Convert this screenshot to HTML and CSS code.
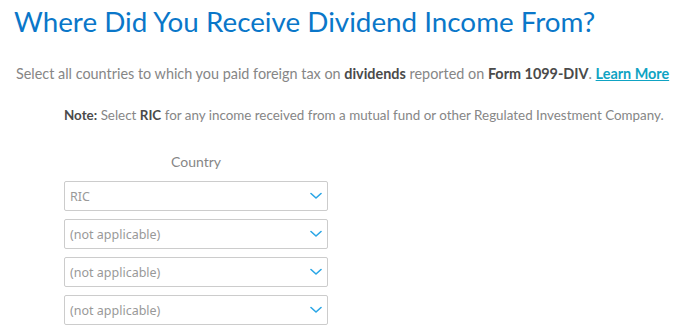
FILE: index.html
```html
<!DOCTYPE html>
<html>
  <head>
    <meta charset="UTF-8" />
    <title>Foreign Tax - Dividends</title>
    <link rel="stylesheet" href="styles.css">
  </head>
  <body>
    <div class="page">
      <h1 class="title">Where Did You Receive Dividend Income From?</h1>
      <p class="intro">Select all countries to which you paid foreign tax on <b>dividends</b> reported on <b>Form 1099-DIV</b>. <a href="#" class="learn">Learn More</a></p>
      <p class="note"><b>Note:</b> Select <b>RIC</b> for any income received from a mutual fund or other Regulated Investment Company.</p>

      <div class="countries">
        <div class="col-label">Country</div>
        <div class="pick">
          <span>RIC</span>
          <svg class="chev" viewBox="0 0 12 8" width="12" height="8"><path d="M1 1.5 L6 6 L11 1.5" fill="none" stroke="#2aa6e6" stroke-width="1.6" stroke-linecap="round" stroke-linejoin="round"/></svg>
        </div>
        <div class="pick">
          <span>(not applicable)</span>
          <svg class="chev" viewBox="0 0 12 8" width="12" height="8"><path d="M1 1.5 L6 6 L11 1.5" fill="none" stroke="#2aa6e6" stroke-width="1.6" stroke-linecap="round" stroke-linejoin="round"/></svg>
        </div>
        <div class="pick">
          <span>(not applicable)</span>
          <svg class="chev" viewBox="0 0 12 8" width="12" height="8"><path d="M1 1.5 L6 6 L11 1.5" fill="none" stroke="#2aa6e6" stroke-width="1.6" stroke-linecap="round" stroke-linejoin="round"/></svg>
        </div>
        <div class="pick">
          <span>(not applicable)</span>
          <svg class="chev" viewBox="0 0 12 8" width="12" height="8"><path d="M1 1.5 L6 6 L11 1.5" fill="none" stroke="#2aa6e6" stroke-width="1.6" stroke-linecap="round" stroke-linejoin="round"/></svg>
        </div>
      </div>
    </div>
  </body>
</html>
```

FILE: styles.css
```css
body {
  margin: 0;
  background: #ffffff;
  font-family: 'Lato', 'Noto Sans', sans-serif;
}

.page {
  padding: 6px 8px 0 16px;
}

.title {
  font-family: 'Lato', sans-serif;
  font-weight: 400;
  font-size: 27.8px;
  color: #0a77c9;
  margin: 0 0 0 -2px;
  line-height: 32px;
}

.intro {
  margin: 27px 0 0 0;
  font-size: 14.4px;
  color: #868686;
  line-height: 18px;
  white-space: nowrap;
}

.intro b, .note b {
  color: #4a4a4a;
  font-weight: 700;
}

.learn {
  color: #0fa3c3;
  font-weight: 700;
  text-decoration: underline;
}

.note {
  margin: 24px 0 0 48px;
  font-size: 13.4px;
  color: #868686;
  line-height: 16px;
  white-space: nowrap;
}

.countries {
  width: 264px;
  margin: 30px 0 0 48px;
  display: flex;
  flex-direction: column;
  gap: 8px;
}

.col-label {
  text-align: center;
  font-size: 14px;
  color: #868686;
  margin-bottom: 3px;
}

.pick {
  height: 28px;
  border: 1px solid #cccccc;
  border-radius: 2px;
  display: flex;
  align-items: center;
  justify-content: space-between;
  padding: 0 5px 0 5px;
  font-size: 12.5px;
  color: #999999;
  font-family: 'Noto Sans', sans-serif;
}
```
